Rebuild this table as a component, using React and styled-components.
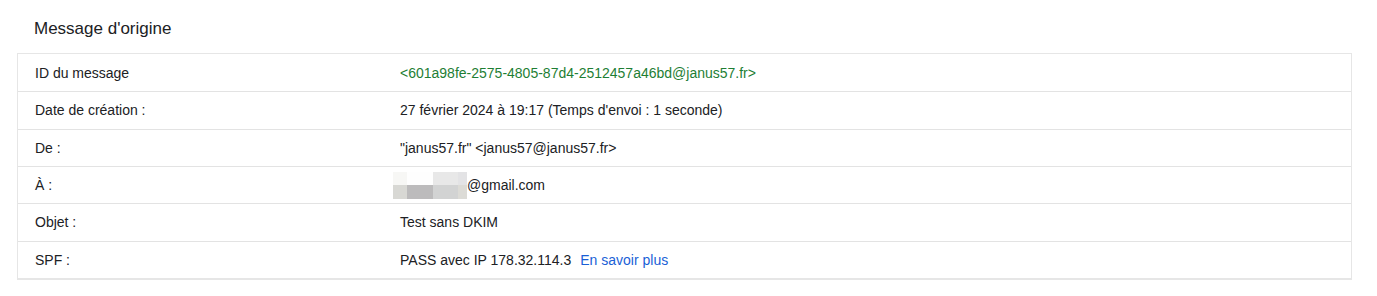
import React from "react";
import styled, { createGlobalStyle } from "styled-components";

const GlobalStyle = createGlobalStyle`
  body {
    margin: 0;
    background: #ffffff;
    font-family: "Liberation Sans", Arial, sans-serif;
    color: #202124;
  }
`;

const Page = styled.div`
  padding: 0 25px 0 17px;
`;

const Title = styled.h2`
  margin: 0;
  padding: 18px 0 14px 17px;
  font-size: 17px;
  line-height: 21px;
  font-weight: normal;
  color: #202124;
`;

const Table = styled.div`
  border: 1px solid #e6e6e6;
  border-bottom-width: 2px;
`;

const Row = styled.div`
  display: grid;
  grid-template-columns: 382px 1fr;
  align-items: center;
  height: 37.33px;
  box-sizing: border-box;
  border-top: ${(p) => (p.first ? "none" : "1px solid #e3e3e3")};
  font-size: 14px;
`;

const Label = styled.div`
  padding-left: 17px;
`;

const Value = styled.div`
  display: flex;
  align-items: center;
  color: ${(p) => (p.green ? "#1e7e34" : "#202124")};
`;

const MoreLink = styled.a`
  margin-left: 9px;
  color: #1a5fd6;
  text-decoration: none;
`;

const Redacted = styled.span`
  display: inline-grid;
  grid-template-columns: 14px 26px 25px 9px;
  grid-template-rows: 13px 14px;
  margin-left: -7px;
  margin-top: 1px;
`;

const Pixel = styled.span`
  background: ${(p) => p.c};
`;

const redactColors = [
  "#f7f7f5", "#fefefe", "#e8e8e8", "#e3e3e5",
  "#d8d8d4", "#bcbbbc", "#d2d3d3", "#dcdbd6",
];

const rows = [
  { label: "ID du message", value: "<601a98fe-2575-4805-87d4-2512457a46bd@janus57.fr>", green: true },
  { label: "Date de création :", value: "27 février 2024 à 19:17 (Temps d'envoi : 1 seconde)" },
  { label: "De :", value: "\"janus57.fr\" <janus57@janus57.fr>" },
  { label: "À :", value: "@gmail.com", redacted: true },
  { label: "Objet :", value: "Test sans DKIM" },
  { label: "SPF :", value: "PASS avec IP 178.32.114.3", link: "En savoir plus" },
];

export default function App() {
  return (
    <>
      <GlobalStyle />
      <Page>
        <Title>Message d'origine</Title>
        <Table>
          {rows.map((r, i) => (
            <Row key={r.label} first={i === 0}>
              <Label>{r.label}</Label>
              <Value green={r.green}>
                {r.redacted && (
                  <Redacted>
                    {redactColors.map((c, j) => (
                      <Pixel key={j} c={c} />
                    ))}
                  </Redacted>
                )}
                {r.value}
                {r.link && <MoreLink href="#">{r.link}</MoreLink>}
              </Value>
            </Row>
          ))}
        </Table>
      </Page>
    </>
  );
}
